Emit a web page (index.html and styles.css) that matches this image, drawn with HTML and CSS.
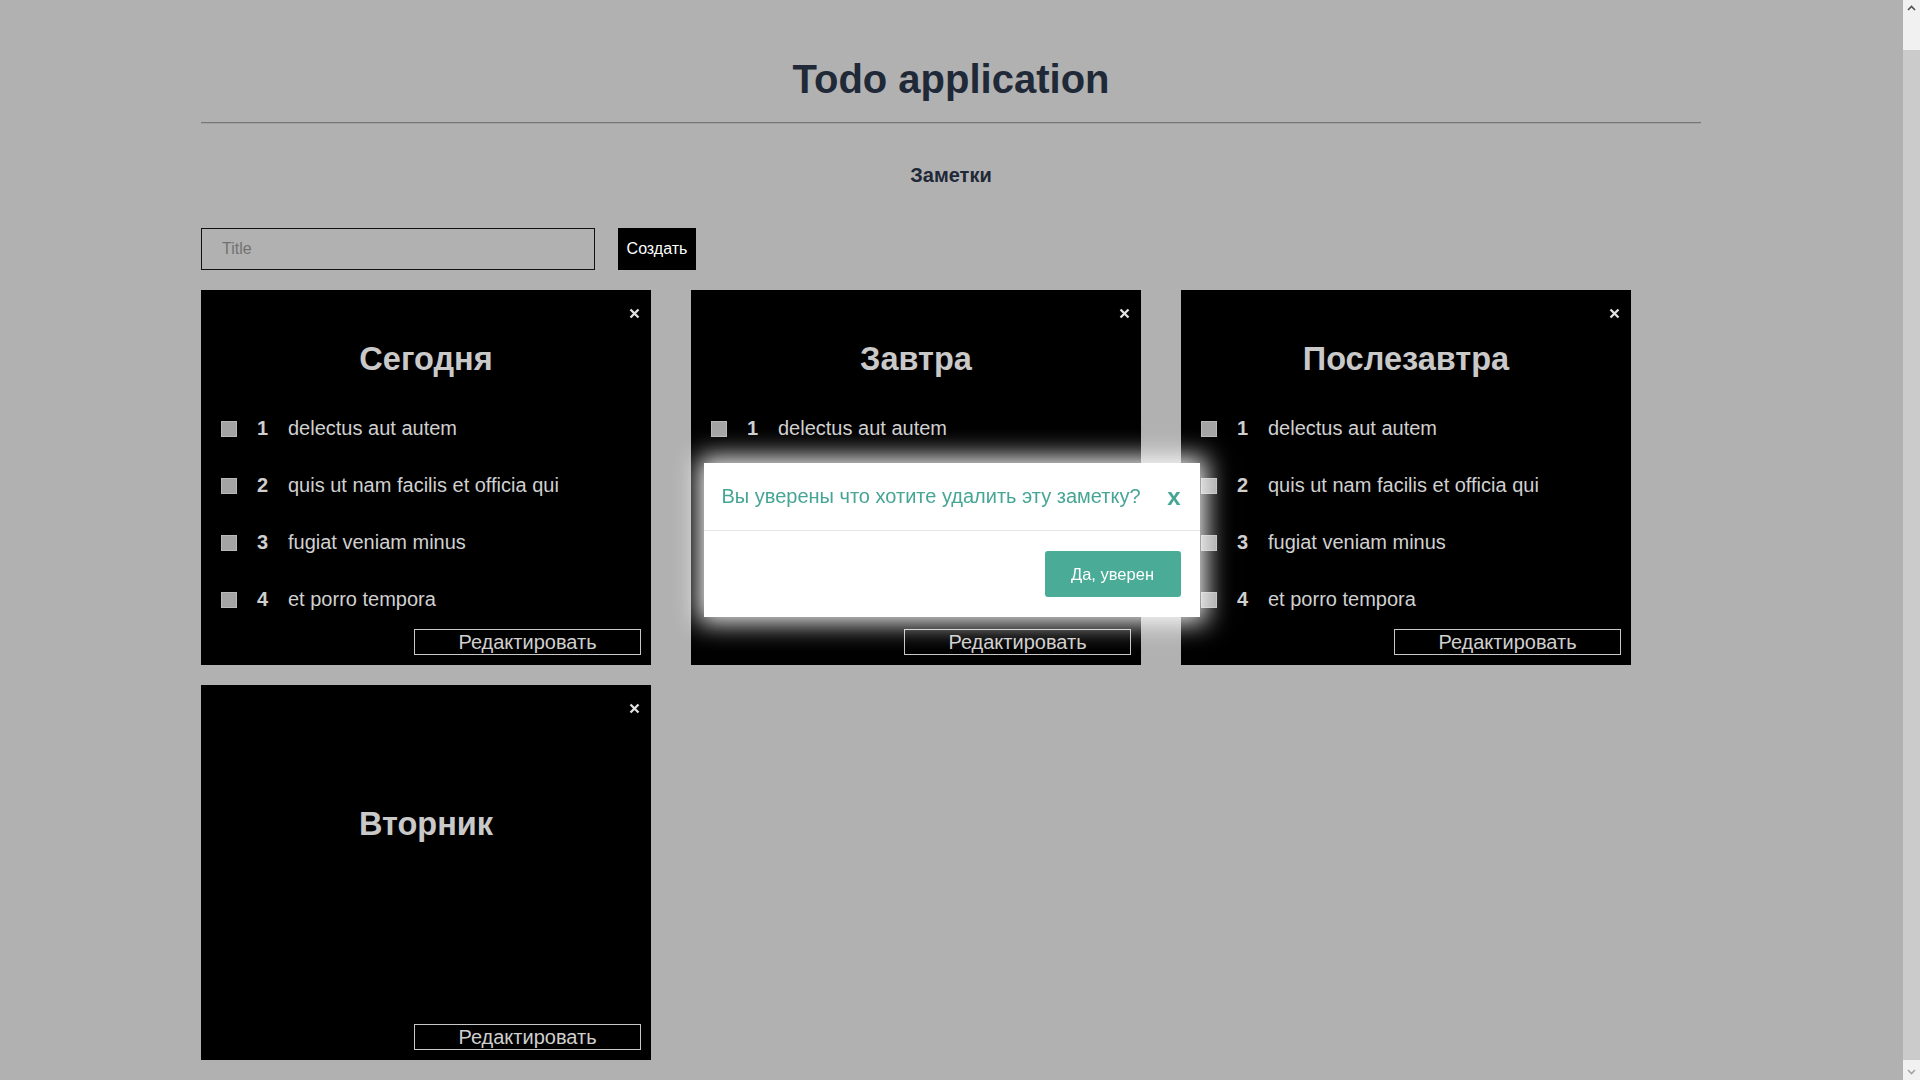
FILE: index.html
```html
<!DOCTYPE html>
<html lang="ru">
<head>
<meta charset="utf-8">
<title>Todo application</title>
<link rel="stylesheet" href="styles.css">
</head>
<body>
<div class="page">
  <div class="container">
    <h1 class="app-title">Todo application</h1>
    <hr class="divider">
    <h2 class="section-title">Заметки</h2>
    <form class="create-form">
      <input class="title-input" type="text" placeholder="Title">
      <button class="create-btn" type="button">Создать</button>
    </form>
    <div class="notes">
      <div class="note">
        <button class="note-close" type="button" aria-label="Удалить"><svg viewBox="0 0 11 11" width="11" height="11"><path d="M1.5 1.5 L9.5 9.5 M9.5 1.5 L1.5 9.5"/></svg></button>
        <h3 class="note-title">Сегодня</h3>
        <ul class="todo-list">
          <li class="todo"><span class="check"></span><span class="todo-num">1</span><span class="todo-text">delectus aut autem</span></li>
          <li class="todo"><span class="check"></span><span class="todo-num">2</span><span class="todo-text">quis ut nam facilis et officia qui</span></li>
          <li class="todo"><span class="check"></span><span class="todo-num">3</span><span class="todo-text">fugiat veniam minus</span></li>
          <li class="todo"><span class="check"></span><span class="todo-num">4</span><span class="todo-text">et porro tempora</span></li>
        </ul>
        <button class="note-edit" type="button">Редактировать</button>
      </div>
      <div class="note">
        <button class="note-close" type="button" aria-label="Удалить"><svg viewBox="0 0 11 11" width="11" height="11"><path d="M1.5 1.5 L9.5 9.5 M9.5 1.5 L1.5 9.5"/></svg></button>
        <h3 class="note-title">Завтра</h3>
        <ul class="todo-list">
          <li class="todo"><span class="check"></span><span class="todo-num">1</span><span class="todo-text">delectus aut autem</span></li>
          <li class="todo"><span class="check"></span><span class="todo-num">2</span><span class="todo-text">quis ut nam facilis et officia qui</span></li>
          <li class="todo"><span class="check"></span><span class="todo-num">3</span><span class="todo-text">fugiat veniam minus</span></li>
          <li class="todo"><span class="check"></span><span class="todo-num">4</span><span class="todo-text">et porro tempora</span></li>
        </ul>
        <button class="note-edit" type="button">Редактировать</button>
      </div>
      <div class="note">
        <button class="note-close" type="button" aria-label="Удалить"><svg viewBox="0 0 11 11" width="11" height="11"><path d="M1.5 1.5 L9.5 9.5 M9.5 1.5 L1.5 9.5"/></svg></button>
        <h3 class="note-title">Послезавтра</h3>
        <ul class="todo-list">
          <li class="todo"><span class="check"></span><span class="todo-num">1</span><span class="todo-text">delectus aut autem</span></li>
          <li class="todo"><span class="check"></span><span class="todo-num">2</span><span class="todo-text">quis ut nam facilis et officia qui</span></li>
          <li class="todo"><span class="check"></span><span class="todo-num">3</span><span class="todo-text">fugiat veniam minus</span></li>
          <li class="todo"><span class="check"></span><span class="todo-num">4</span><span class="todo-text">et porro tempora</span></li>
        </ul>
        <button class="note-edit" type="button">Редактировать</button>
      </div>
      <div class="note note--empty">
        <button class="note-close" type="button" aria-label="Удалить"><svg viewBox="0 0 11 11" width="11" height="11"><path d="M1.5 1.5 L9.5 9.5 M9.5 1.5 L1.5 9.5"/></svg></button>
        <h3 class="note-title">Вторник</h3>
        <ul class="todo-list"></ul>
        <button class="note-edit" type="button">Редактировать</button>
      </div>
    </div>
  </div>
</div>
<div class="scrollbar" aria-hidden="true">
  <div class="sb-btn"><svg viewBox="0 0 17 17" width="17" height="17"><path class="sb-arrow" d="M5 10 L8.5 6.5 L12 10"/></svg></div>
  <div class="sb-track"><div class="sb-thumb"></div></div>
  <div class="sb-btn"><svg viewBox="0 0 17 17" width="17" height="17"><path class="sb-arrow sb-arrow--light" d="M5 7 L8.5 10.5 L12 7"/></svg></div>
</div>
<div class="modal-layer">
  <div class="modal">
    <div class="modal-header">
      <span class="modal-question">Вы уверены что хотите удалить эту заметку?</span>
      <button class="modal-close" type="button">x</button>
    </div>
    <div class="modal-footer">
      <button class="modal-confirm" type="button">Да, уверен</button>
    </div>
  </div>
</div>
</body>
</html>
```

FILE: styles.css
```css
html, body {
  height: 100%;
}

body {
  margin: 0;
  display: flex;
  background: #b1b1b1;
  font-family: "Liberation Sans", Arial, sans-serif;
  color: #1f2937;
  overflow: hidden;
}

.page {
  flex: 1;
  min-width: 0;
  padding-right: 1px;
}

.container {
  width: 1500px;
  margin: 0 auto;
}

.app-title {
  margin: 0;
  padding-top: 56px;
  font-size: 40px;
  line-height: 46px;
  font-weight: 700;
  text-align: center;
  color: #1f2937;
}

.divider {
  margin: 20px 0 0;
  height: 0;
  border: 0;
  border-top: 1px solid #767676;
  border-bottom: 1px solid #a2a2a2;
}

.section-title {
  margin: 40px 0 0;
  font-size: 20px;
  line-height: 23px;
  font-weight: 700;
  text-align: center;
  color: #1f2937;
}

.create-form {
  display: flex;
  gap: 23px;
  margin-top: 41px;
}

.title-input {
  box-sizing: border-box;
  width: 394px;
  height: 42px;
  margin: 0;
  padding: 0 20px;
  border: 1px solid #111;
  background: transparent;
  font-family: inherit;
  font-size: 16px;
  color: #111;
  outline: none;
}

.title-input::placeholder {
  color: #727272;
}

.create-btn {
  box-sizing: border-box;
  width: 78px;
  height: 42px;
  margin: 0;
  padding: 0;
  border: 0;
  background: #000;
  color: #fff;
  font-family: inherit;
  font-size: 16px;
}

.notes {
  display: grid;
  grid-template-columns: repeat(3, 450px);
  column-gap: 40px;
  row-gap: 20px;
  margin-top: 20px;
}

.note {
  position: relative;
  box-sizing: border-box;
  height: 375px;
  padding-top: 51px;
  background: #000;
  color: #cfcfcf;
}

.note--empty {
  padding-top: 121px;
}

.note-close {
  position: absolute;
  top: 18px;
  right: 11px;
  width: 11px;
  height: 11px;
  padding: 0;
  border: 0;
  background: none;
  display: flex;
}

.note-close svg {
  stroke: #e2e2e2;
  stroke-width: 2.3;
  fill: none;
}

.note-title {
  margin: 0;
  font-size: 32.5px;
  line-height: 37px;
  font-weight: 700;
  text-align: center;
  color: #c9c9c9;
}

.todo-list {
  list-style: none;
  margin: 22px 0 0;
  padding: 0 0 0 20px;
}

.todo {
  display: grid;
  grid-template-columns: 16px 11px auto;
  column-gap: 20px;
  align-items: center;
  height: 57px;
  font-size: 20px;
  line-height: 23px;
  color: #d0d0d0;
}

.check {
  box-sizing: border-box;
  width: 16px;
  height: 16px;
  background: #a4a4a4;
  border: 1px solid #b9b9b9;
}

.todo-num {
  font-weight: 700;
  color: #cfcfcf;
}

.note-edit {
  position: absolute;
  right: 10px;
  bottom: 10px;
  box-sizing: border-box;
  width: 227px;
  height: 26px;
  margin: 0;
  padding: 0;
  border: 1px solid #c8c8c8;
  background: #000;
  color: #cfcfcf;
  font-family: inherit;
  font-size: 20px;
  line-height: 24px;
}

.scrollbar {
  flex: 0 0 17px;
  height: 100%;
  display: flex;
  flex-direction: column;
  background: #f1f1f1;
}

.sb-btn {
  height: 17px;
  flex: 0 0 17px;
  background: #f1f1f1;
}

.sb-btn svg {
  display: block;
}

.sb-arrow {
  fill: none;
  stroke: #505050;
  stroke-width: 1.6;
}

.sb-arrow--light {
  stroke: #a3a3a3;
}

.sb-track {
  flex: 1;
  display: flex;
  flex-direction: column;
  padding: 33px 0 3px;
}

.sb-thumb {
  flex: 1;
  background: #cbcbcb;
}

.modal-layer {
  position: fixed;
  top: 0;
  bottom: 0;
  left: 0;
  right: 17px;
  display: flex;
  align-items: center;
  justify-content: center;
}

.modal {
  width: 496px;
  background: #fff;
  box-shadow: 0 0 24px 6px rgba(255, 255, 255, 0.95);
}

.modal-header {
  display: flex;
  align-items: center;
  justify-content: space-between;
  height: 67px;
  padding: 0 19px 0 18px;
  border-bottom: 1px solid #e6e6e6;
}

.modal-question {
  font-size: 20px;
  line-height: 23px;
  color: #46a595;
}

.modal-close {
  padding: 0;
  border: 0;
  background: none;
  font-family: inherit;
  font-size: 24px;
  font-weight: 700;
  line-height: 24px;
  color: #46a595;
}

.modal-footer {
  display: flex;
  justify-content: flex-end;
  padding: 20px 19px 20px;
}

.modal-confirm {
  width: 136px;
  height: 46px;
  padding: 0;
  border: 0;
  border-radius: 3px;
  background: #4aab97;
  color: #fff;
  font-family: inherit;
  font-size: 16.5px;
}
```
